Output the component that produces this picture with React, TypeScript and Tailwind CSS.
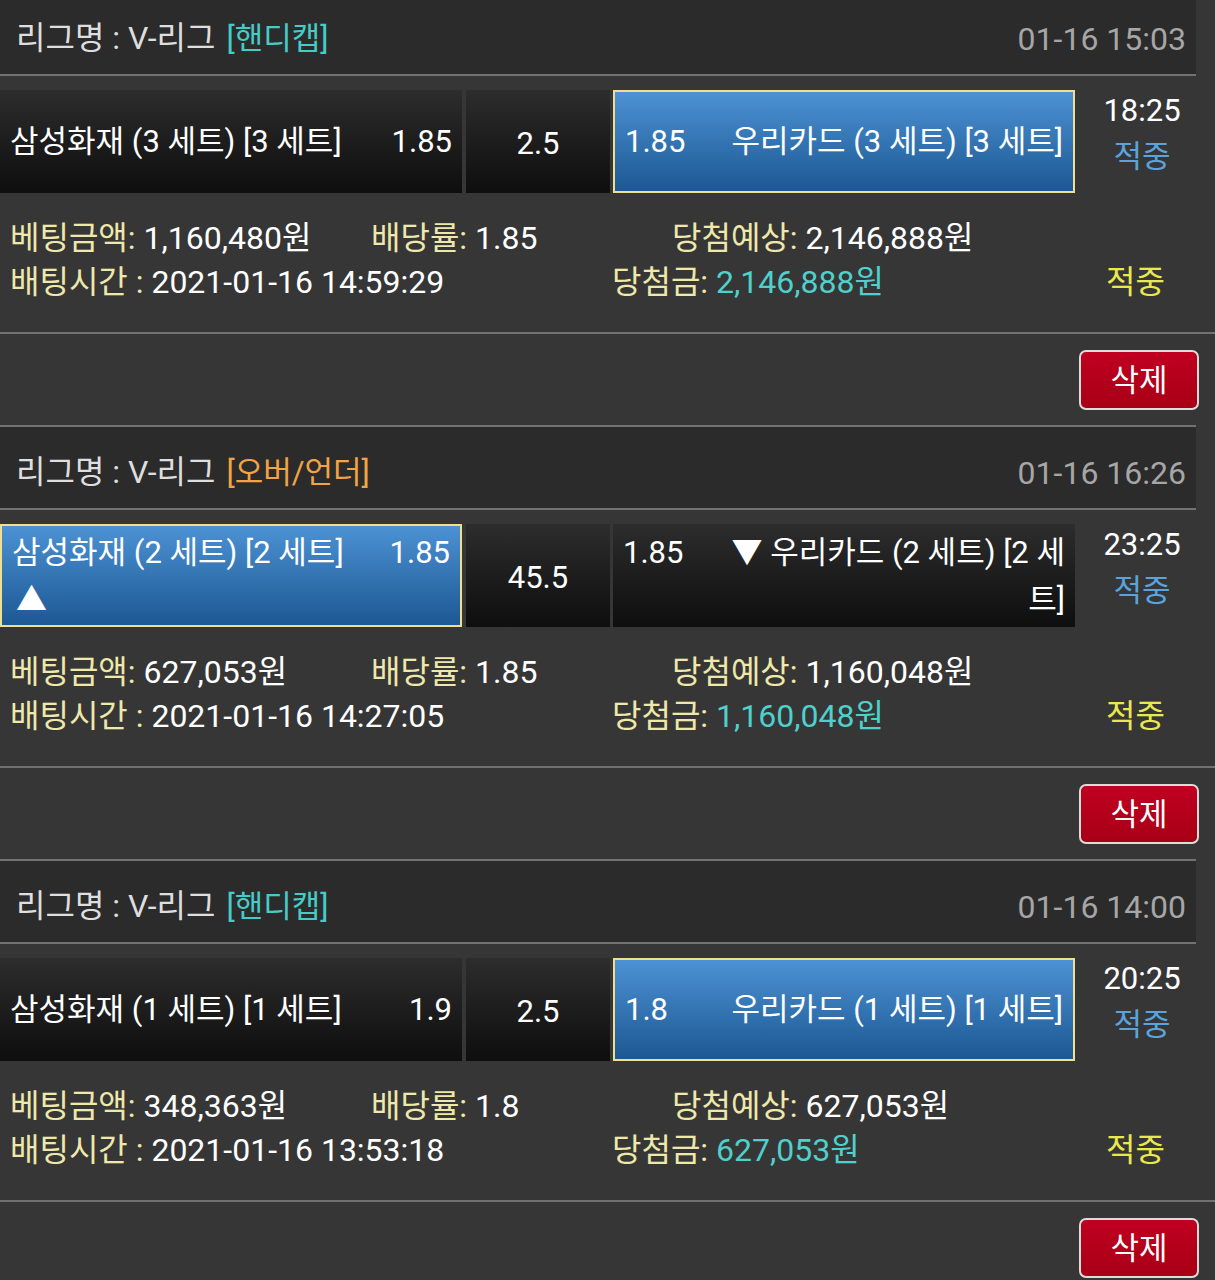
import React from "react";

// ─── Types ─────────────────────────────────────────────────────────────────

interface BetRow {
  kind: string;
  kindCls: string;
  date: string;
  home: string[];
  homeOdds: string;
  line: string;
  away: string[];
  awayOdds: string;
  pick: "home" | "away";
  time: string;
  bet: string;
  rate: string;
  expected: string;
  betTime: string;
  win: string;
}

const rows: BetRow[] = [
  {
    kind: "[핸디캡]", kindCls: "text-[#46cbc8]", date: "01-16 15:03",
    home: ["삼성화재 (3 세트) [3 세트]"], homeOdds: "1.85", line: "2.5",
    away: ["우리카드 (3 세트) [3 세트]"], awayOdds: "1.85", pick: "away", time: "18:25",
    bet: "1,160,480원", rate: "1.85", expected: "2,146,888원", betTime: "2021-01-16 14:59:29", win: "2,146,888원",
  },
  {
    kind: "[오버/언더]", kindCls: "text-[#f2a444]", date: "01-16 16:26",
    home: ["삼성화재 (2 세트) [2 세트]", "▲"], homeOdds: "1.85", line: "45.5",
    away: ["▼ 우리카드 (2 세트) [2 세", "트]"], awayOdds: "1.85", pick: "home", time: "23:25",
    bet: "627,053원", rate: "1.85", expected: "1,160,048원", betTime: "2021-01-16 14:27:05", win: "1,160,048원",
  },
  {
    kind: "[핸디캡]", kindCls: "text-[#46cbc8]", date: "01-16 14:00",
    home: ["삼성화재 (1 세트) [1 세트]"], homeOdds: "1.9", line: "2.5",
    away: ["우리카드 (1 세트) [1 세트]"], awayOdds: "1.8", pick: "away", time: "20:25",
    bet: "348,363원", rate: "1.8", expected: "627,053원", betTime: "2021-01-16 13:53:18", win: "627,053원",
  },
];

const cellBase = "h-[103px] flex flex-col justify-center text-white text-[31px] leading-[47px]";
const blackCell = "bg-gradient-to-b from-[#2d2d2d] to-[#0e0e0e]";
const blueCell = "bg-gradient-to-b from-[#4c92d4] to-[#1c5893] border-2 border-[#efdf8e]";

// ─── Card ──────────────────────────────────────────────────────────────────

function BetCard({ r }: { r: BetRow }) {
  const homeSel = r.pick === "home";
  return (
    <div>
      <div className="w-[1196px] h-[2px] bg-[#727272]" />
      <div className="w-[1196px] h-[81px] bg-[#2b2b2b] flex items-center justify-between pl-4 pr-[10px] pt-[10px] text-[32px]">
        <div className="text-[#dedede]">
          리그명 : V-리그 <span className={`ml-[3px] text-[31px] ${r.kindCls}`}>{r.kind}</span>
        </div>
        <div className="text-[#a6a6a6]">{r.date}</div>
      </div>
      <div className="w-[1196px] h-[2px] bg-[#727272]" />

      {/* match row */}
      <div className="mt-[14px] flex">
        <div className={`w-[462px] ${cellBase} ${homeSel ? blueCell : blackCell} px-[10px]`}>
          <div className="flex justify-between">
            <span>{r.home[0]}</span>
            <span>{r.homeOdds}</span>
          </div>
          {r.home[1] && <div className="pl-[4px]">{r.home[1]}</div>}
        </div>
        <div className={`ml-[4px] w-[144px] ${cellBase} ${blackCell} items-center pt-[3px]`}>{r.line}</div>
        <div className={`ml-[3px] w-[462px] ${cellBase} ${homeSel ? blackCell : blueCell} px-[10px]`}>
          <div className="flex justify-between">
            <span>{r.awayOdds}</span>
            <span>{r.away[0]}</span>
          </div>
          {r.away[1] && <div className="text-right">{r.away[1]}</div>}
        </div>
        <div className="w-[134px] flex flex-col items-center text-[31px]">
          <div className="leading-[42px] text-white">{r.time}</div>
          <div className="leading-[50px] text-[#5aa3dd]">적중</div>
        </div>
      </div>

      {/* info */}
      <div className="pt-[23px] pb-[28px] pl-[10px] text-[32px] leading-[44px] text-white">
        <div className="flex">
          <div className="w-[361px]"><span className="text-[#eee8aa]">베팅금액:</span> {r.bet}</div>
          <div className="w-[301px]"><span className="text-[#eee8aa]">배당률:</span> {r.rate}</div>
          <div><span className="text-[#eee8aa]">당첨예상:</span> {r.expected}</div>
        </div>
        <div className="flex">
          <div className="w-[602px]"><span className="text-[#eee8aa]">배팅시간 :</span> {r.betTime}</div>
          <div className="w-[494px]"><span className="text-[#eee8aa]">당첨금:</span> <span className="text-[#4fd0cc]">{r.win}</span></div>
          <div className="text-[#e9e94e]">적중</div>
        </div>
      </div>
      <div className="h-[2px] bg-[#727272]" />

      {/* actions */}
      <div className="h-[91px] pt-[16px] flex justify-end pr-[16px]">
        <button className="w-[120px] h-[60px] rounded-[7px] border-2 border-[#dcdcdc] bg-gradient-to-b from-[#c00020] to-[#a80016] text-white text-[31px] leading-none">
          삭제
        </button>
      </div>
    </div>
  );
}

// ─── Page ──────────────────────────────────────────────────────────────────

export default function App() {
  return (
    <div
      className="w-[1215px] h-[1280px] overflow-hidden bg-[#363636]"
      style={{ fontFamily: 'Roboto, "Noto Sans CJK KR", "DejaVu Sans", sans-serif' }}
    >
      <div className="-mt-[9px]">
        {rows.map((r, i) => (
          <BetCard key={i} r={r} />
        ))}
      </div>
    </div>
  );
}
